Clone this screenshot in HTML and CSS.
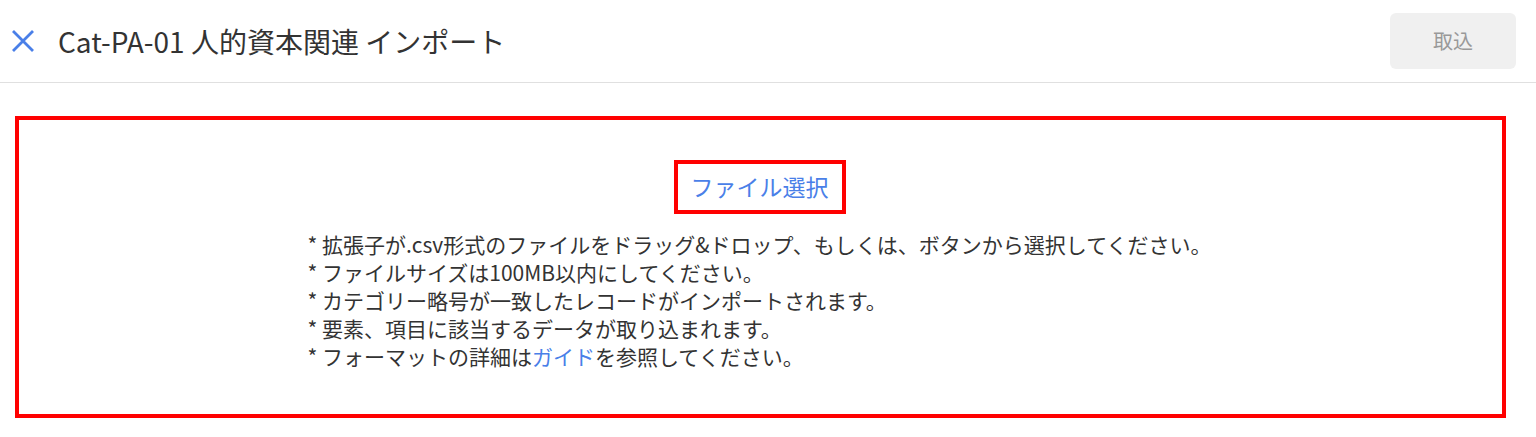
FILE: index.html
```html
<!DOCTYPE html>
<html lang="ja">
<head>
    <meta charset="UTF-8">
    <meta name="viewport" content="width=device-width, initial-scale=1.0">
    <title>Cat-PA-01 人的資本関連 インポート</title>
    <link rel="stylesheet" href="styles.css">
</head>
<body>

<header class="header">
    <div class="header-left">
        <button class="close-btn" aria-label="閉じる">
            <svg width="24" height="24" viewBox="0 0 24 24">
                <path d="M2 2 L22 22 M22 2 L2 22" stroke="#4a7fe8" stroke-width="2.8" fill="none"/>
            </svg>
        </button>
        <h1 class="title">Cat-PA-01 人的資本関連 インポート</h1>
    </div>
    <button class="import-btn" disabled>取込</button>
</header>

<!-- Drop area -->
<main class="content">
    <div class="drop-area">
        <button class="select-btn">ファイル選択</button>
        <ul class="notes">
            <li>* 拡張子が.csv形式のファイルをドラッグ&amp;ドロップ、もしくは、ボタンから選択してください。</li>
            <li>* ファイルサイズは100MB以内にしてください。</li>
            <li>* カテゴリー略号が一致したレコードがインポートされます。</li>
            <li>* 要素、項目に該当するデータが取り込まれます。</li>
            <li>* フォーマットの詳細は<a href="#" class="link">ガイド</a>を参照してください。</li>
        </ul>
    </div>
</main>

</body>
</html>
```

FILE: styles.css
```css
* {
    margin: 0;
    padding: 0;
    box-sizing: border-box;
}

body {
    font-family: 'Noto Sans CJK JP', 'Noto Sans', sans-serif;
    background: #fff;
    color: #333;
}

.header {
    height: 83px;
    display: flex;
    align-items: center;
    justify-content: space-between;
    padding: 0 20px 0 11px;
    border-bottom: 1px solid #e0e0e0;
}

.header-left {
    display: flex;
    align-items: center;
    gap: 23px;
}

.close-btn {
    background: none;
    border: none;
    display: flex;
    cursor: pointer;
}

.title {
    font-size: 28px;
    font-weight: 400;
    color: #333;
}

.import-btn {
    width: 126px;
    height: 56px;
    margin-top: -1px;
    background: #f0f0f0;
    border: none;
    border-radius: 6px;
    font-family: inherit;
    font-size: 20px;
    color: #999;
}

.content {
    padding: 33px 30px 19px 15px;
}

.drop-area {
    border: 4px solid #ff0000;
    height: 302px;
    display: flex;
    flex-direction: column;
    align-items: center;
    padding-top: 40px;
}

.select-btn {
    background: none;
    border: 4px solid #ff0000;
    padding: 5px 13px 7px;
    margin-right: 2px;
    font-family: inherit;
    font-size: 23px;
    color: #4a7fe8;
    cursor: pointer;
}

.notes {
    list-style: none;
    margin-top: 16px;
    margin-right: 2px;
    font-size: 21px;
    line-height: 28px;
    color: #333;
}

.link {
    color: #4a7fe8;
    text-decoration: none;
}
```
